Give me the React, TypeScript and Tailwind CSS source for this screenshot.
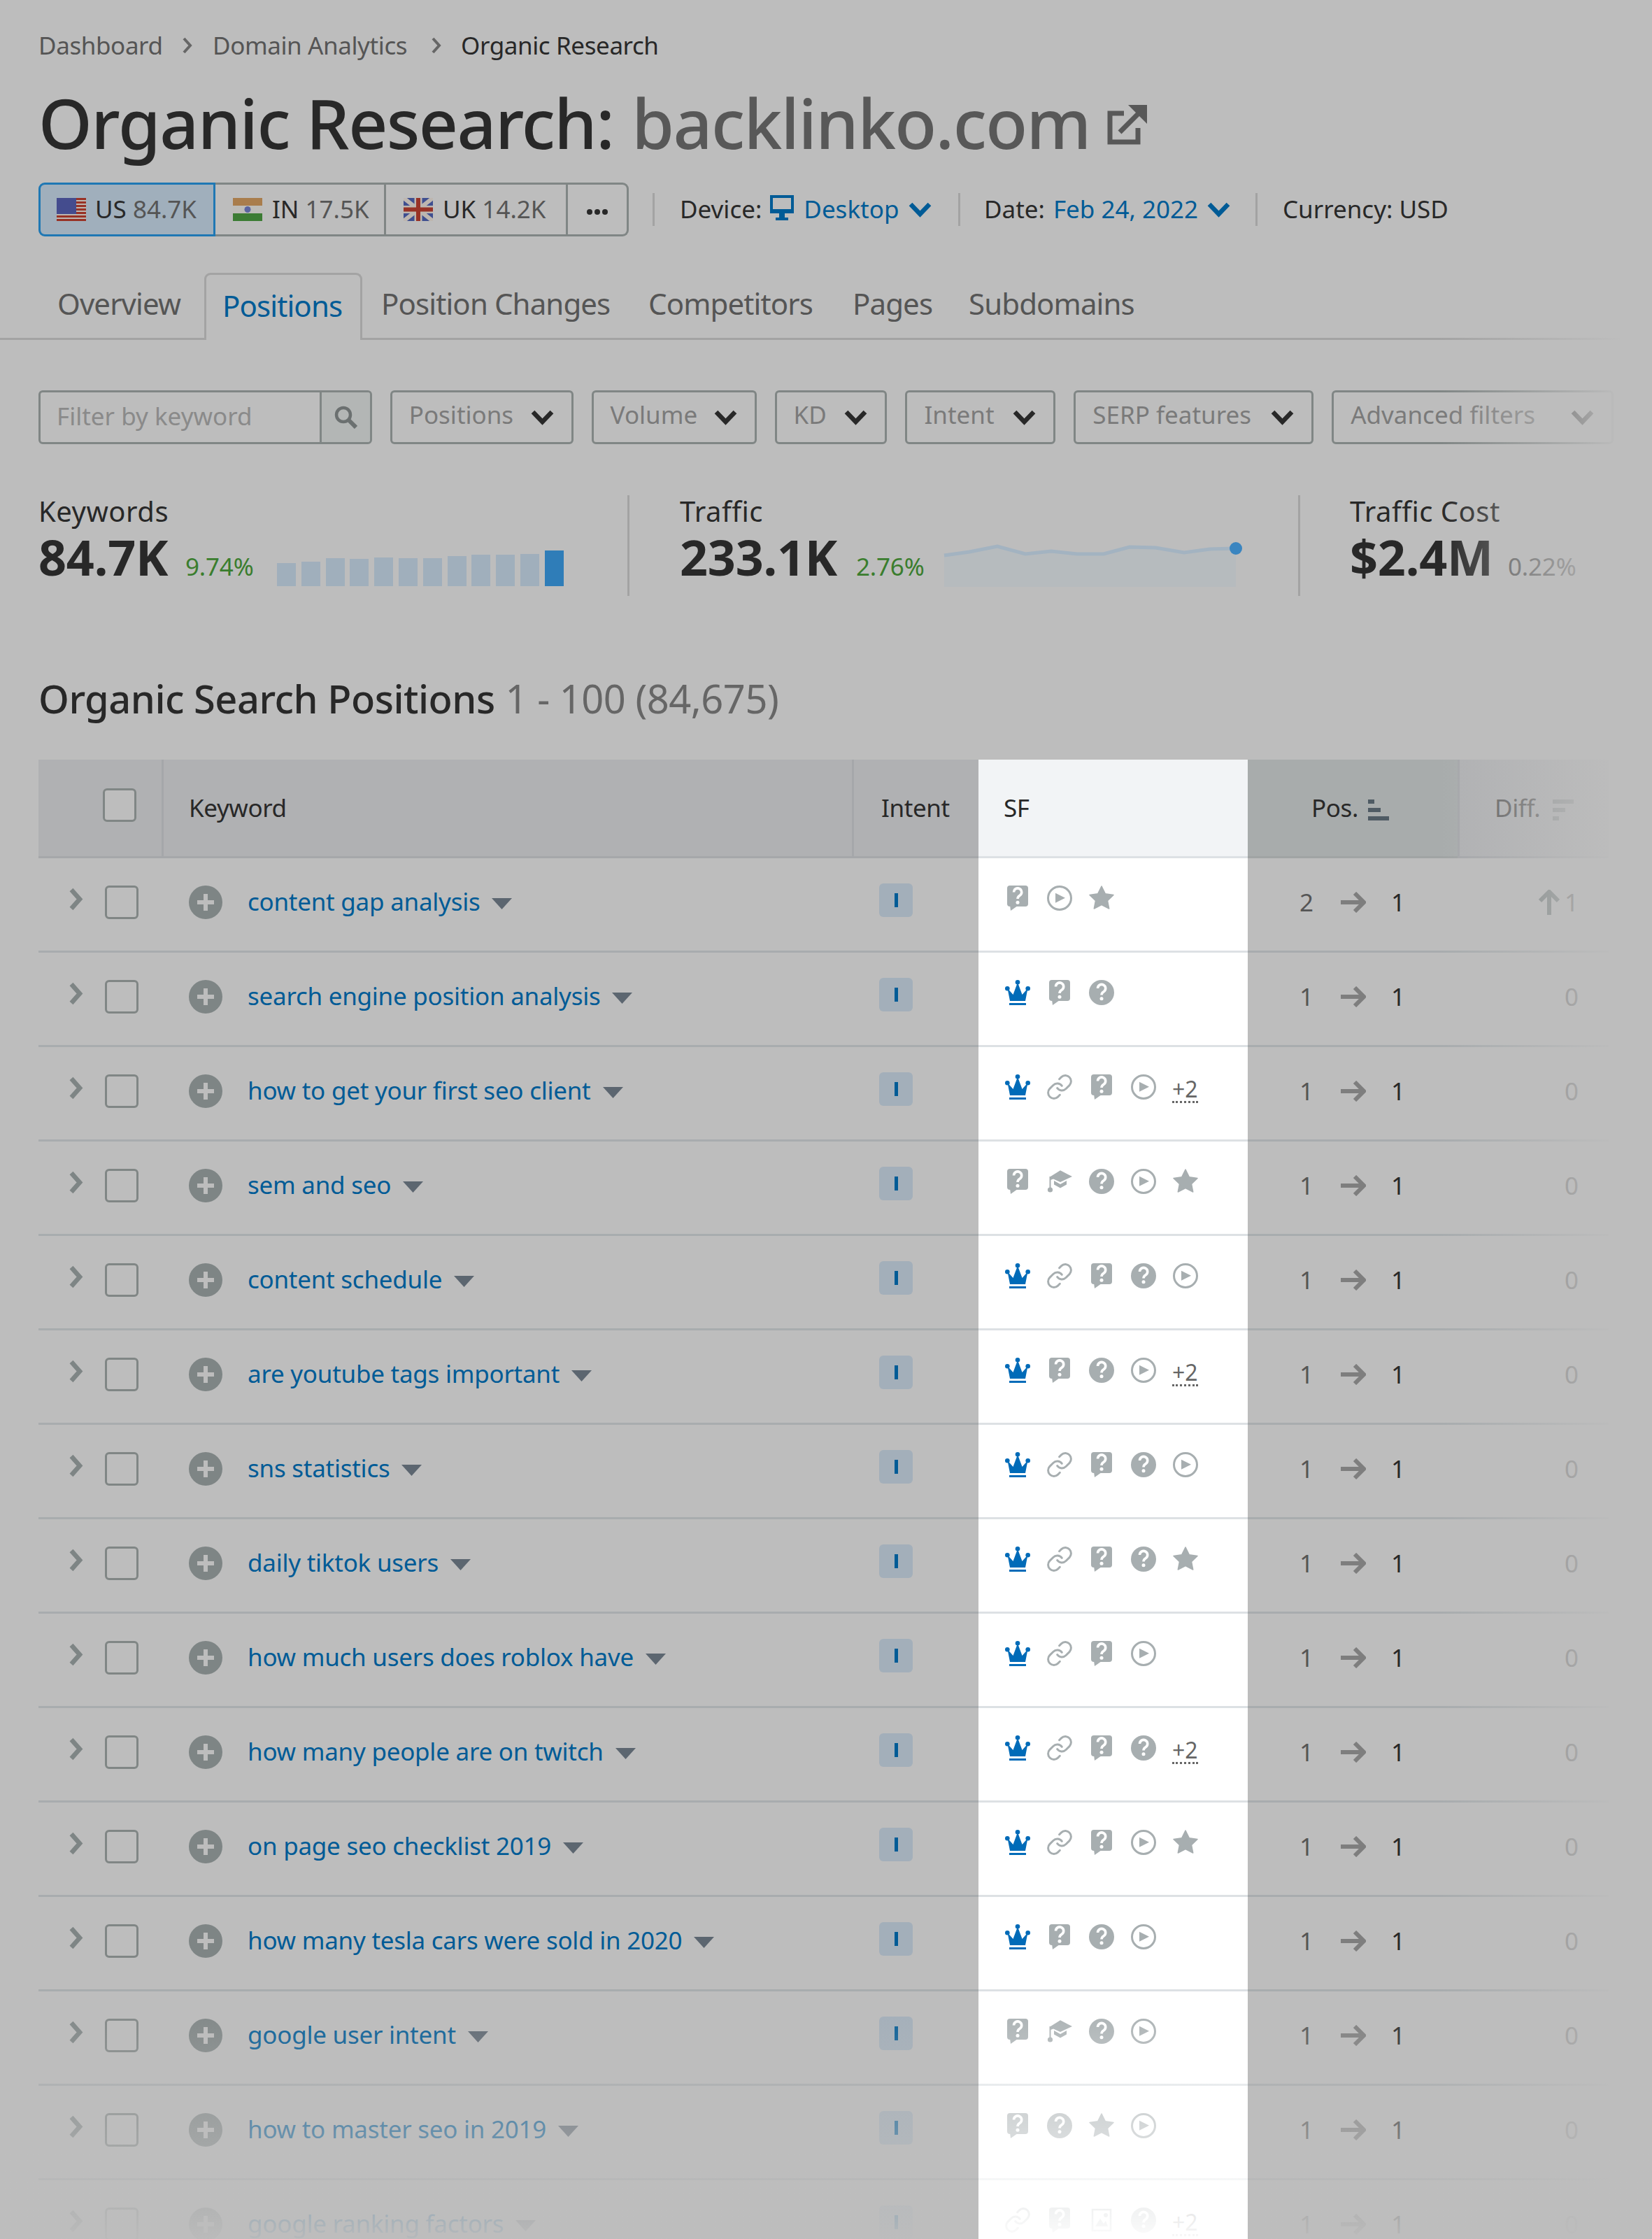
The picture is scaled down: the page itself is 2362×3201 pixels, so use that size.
import React from "react";

type Feature = "crown" | "link" | "bubble" | "help" | "play" | "star" | "cap" | "image" | "more";

type Row = { keyword: string; features: Feature[]; from: string; diff?: string };

const rows: Row[] = [
  { keyword: "content gap analysis", features: ["bubble", "play", "star"], from: "2", diff: "1" },
  { keyword: "search engine position analysis", features: ["crown", "bubble", "help"], from: "1" },
  { keyword: "how to get your first seo client", features: ["crown", "link", "bubble", "play", "more"], from: "1" },
  { keyword: "sem and seo", features: ["bubble", "cap", "help", "play", "star"], from: "1" },
  { keyword: "content schedule", features: ["crown", "link", "bubble", "help", "play"], from: "1" },
  { keyword: "are youtube tags important", features: ["crown", "bubble", "help", "play", "more"], from: "1" },
  { keyword: "sns statistics", features: ["crown", "link", "bubble", "help", "play"], from: "1" },
  { keyword: "daily tiktok users", features: ["crown", "link", "bubble", "help", "star"], from: "1" },
  { keyword: "how much users does roblox have", features: ["crown", "link", "bubble", "play"], from: "1" },
  { keyword: "how many people are on twitch", features: ["crown", "link", "bubble", "help", "more"], from: "1" },
  { keyword: "on page seo checklist 2019", features: ["crown", "link", "bubble", "play", "star"], from: "1" },
  { keyword: "how many tesla cars were sold in 2020", features: ["crown", "bubble", "help", "play"], from: "1" },
  { keyword: "google user intent", features: ["bubble", "cap", "help", "play"], from: "1" },
  { keyword: "how to master seo in 2019", features: ["bubble", "help", "star", "play"], from: "1" },
  { keyword: "google ranking factors", features: ["link", "bubble", "image", "help", "more"], from: "1" },
];

const barHeights = [33, 35, 40, 39, 41, 40, 40, 43, 45, 45, 46, 51];
const linePoints = "0,23 36,18 76,10 116,21 153,17 190,21 228,21 265,11 302,12 343,19 380,14 417,13";

function Chevron({ color = "#282828" }: { color?: string }) {
  return (
    <svg width="33" height="22" viewBox="0 0 33 22" className="shrink-0">
      <polyline points="3,3 16.5,17 30,3" fill="none" stroke={color} strokeWidth="6.5" />
    </svg>
  );
}

function QuestionMark({ dy = 0 }: { dy?: number }) {
  return (
    <g transform={`translate(0 ${dy})`}>
      <path d="M12.5 9.5a5.6 5.6 0 1 1 8.6 4.7c-2 1.3-3.1 2.2-3.1 4.8" fill="none" stroke="#fff" strokeWidth="3.6" />
      <circle cx="18" cy="24.3" r="2.5" fill="#fff" />
    </g>
  );
}

function FeatureIcon({ type }: { type: Feature }) {
  const gray = "#a7aeb0";
  return (
    <svg width="36" height="36" viewBox="0 0 36 36" fill={gray}>
      {type === "crown" && (
        <g fill="#006bb8">
          <circle cx="18" cy="3.3" r="3.3" />
          <circle cx="3.3" cy="12.3" r="3.3" />
          <circle cx="32.7" cy="12.3" r="3.3" />
          <polygon points="3.5,12 11.5,21 18,3.5 24.5,21 32.5,12 29,30 7,30" />
          <rect x="6" y="33" width="24" height="3" />
        </g>
      )}
      {type === "bubble" && (
        <>
          <rect x="3" y="0" width="30" height="30" rx="4" />
          <polygon points="7,28 8,36 18,29" />
          <QuestionMark />
        </>
      )}
      {type === "help" && (
        <>
          <circle cx="18" cy="18" r="18" />
          <QuestionMark dy={2.5} />
        </>
      )}
      {type === "play" && (
        <>
          <circle cx="18" cy="18" r="16.5" fill="none" stroke={gray} strokeWidth="3" />
          <polygon points="12,10.7 12,24.7 26,17.7" />
        </>
      )}
      {type === "star" && (
        <polygon
          points="18,1 23.2,11.7 35,13.4 26.5,21.6 28.7,33 18,27.5 7.3,33 9.5,21.6 1,13.4 12.8,11.7"
          stroke={gray}
          strokeWidth="1.5"
          strokeLinejoin="round"
        />
      )}
      {type === "link" && (
        <g fill="none" stroke={gray} strokeWidth="1.8" strokeLinecap="round" transform="translate(-1.8 -1.8) scale(1.65)">
          <path d="M10 13a5 5 0 0 0 7.54.54l3-3a5 5 0 0 0-7.07-7.07l-1.72 1.71" />
          <path d="M14 11a5 5 0 0 0-7.54-.54l-3 3a5 5 0 0 0 7.07 7.07l1.71-1.71" />
        </g>
      )}
      {type === "cap" && (
        <>
          <polygon points="19,2.3 36,11 19,19 9,14.5 5,16 5,11" />
          <polygon points="10,17 19,22 28,17 28,22.5 19,27.5 10,22.5" />
          <rect x="3.5" y="11" width="2" height="16" />
          <circle cx="4.5" cy="30" r="3.6" />
        </>
      )}
      {type === "image" && (
        <>
          <rect x="5" y="3" width="26" height="30" fill="none" stroke={gray} strokeWidth="2.5" />
          <polygon points="9,27 16,16 21,23 24,19 27,27" />
          <circle cx="24" cy="11" r="3" />
        </>
      )}
    </svg>
  );
}

function SortIcon({ reversed, color }: { reversed?: boolean; color: string }) {
  const widths = reversed ? [30, 18, 9] : [9, 18, 30];
  return (
    <svg width="30" height="30" viewBox="0 0 30 30">
      {widths.map((w, i) => (
        <rect key={i} x="0" y={i * 12} width={w} height="6" fill={color} />
      ))}
    </svg>
  );
}

function CheckBox() {
  return <div className="h-[48px] w-[48px] rounded-[6px] border-[3px] border-[#808685]" />;
}

function Flag({ code }: { code: "us" | "in" | "uk" }) {
  return (
    <svg width="42" height="33" viewBox="0 0 42 33" className="shrink-0">
      {code === "us" && (
        <>
          <rect width="42" height="33" fill="#bdb6b0" />
          {[0, 5, 10, 15, 20, 25, 30].map((y) => (
            <rect key={y} y={y} width="42" height="3" fill="#983226" />
          ))}
          <rect width="28" height="23" fill="#444c8e" />
        </>
      )}
      {code === "in" && (
        <>
          <rect width="42" height="11" fill="#a97d4c" />
          <rect y="11" width="42" height="11" fill="#bdbcb8" />
          <rect y="22" width="42" height="11" fill="#3c7c34" />
          <circle cx="21" cy="16.5" r="4.5" fill="#5a64a0" />
        </>
      )}
      {code === "uk" && (
        <>
          <rect width="42" height="33" fill="#3f4f90" />
          <path d="M0 0L42 33M42 0L0 33" stroke="#bdb6b0" strokeWidth="6" />
          <path d="M21 0V33M0 16.5H42" stroke="#bdb6b0" strokeWidth="11" />
          <path d="M21 0V33M0 16.5H42" stroke="#983226" strokeWidth="6" />
        </>
      )}
    </svg>
  );
}

function FilterButton({ label, width }: { label: string; width: string }) {
  return (
    <div className={`flex h-[77px] items-center justify-between rounded-[6px] border-[3px] border-[#808685] pl-[24px] pr-[25px] ${width}`}>
      <span className="-mt-[6px] text-[#7a7a7a]">{label}</span>
      <Chevron />
    </div>
  );
}

function TableRow({ row }: { row: Row }) {
  return (
    <div className="grid h-[135px] grid-cols-[176px_987px_181px_385px_300px_216px] text-[35px]">
      <div className="flex items-center justify-between border-b-[3px] border-[#a8acae] pb-[6px] pl-[44px] pr-[33px]">
        <svg width="21" height="33" viewBox="0 0 21 33" className="-mt-[10px]">
          <polyline points="3,3 15,16.5 3,30" fill="none" stroke="#7e8585" strokeWidth="6.5" />
        </svg>
        <CheckBox />
      </div>
      <div className="flex items-center border-b-[3px] border-[#a8acae] pb-[6px] pl-[39px]">
        <div className="relative h-[48px] w-[48px] rounded-full bg-[#7e8585]">
          <div className="absolute left-[12px] top-[21px] h-[6px] w-[24px] bg-[#bdbdbd]" />
          <div className="absolute left-[21px] top-[12px] h-[24px] w-[6px] bg-[#bdbdbd]" />
        </div>
        <span className="-mt-[2px] ml-[36px] tracking-[-0.25px] text-[#005b96]">{row.keyword}</span>
        <svg width="29" height="16" viewBox="0 0 29 16" className="ml-[17px] mt-[4px]">
          <polygon points="0,0 29,0 14.5,16" fill="#5c6670" />
        </svg>
      </div>
      <div className="flex items-center border-b-[3px] border-[#a8acae] pb-[6px] pl-[39px]">
        <div className="-mt-[6px] flex h-[48px] w-[48px] items-center justify-center rounded-[6px] bg-[#a3afba]">
          <div className="h-[20px] w-[5px] bg-[#005b96]" />
        </div>
      </div>
      <div className="flex items-start gap-[24px] border-b-[3px] border-[#dde1e4] bg-white pl-[38px] pt-[39px]">
        {row.features.map((type, i) =>
          type === "more" ? (
            <span key={i} className="-ml-[1px] mt-[4px] border-b-[3px] border-dotted border-[#666] text-[32px] leading-[34px] text-[#666]">
              +2
            </span>
          ) : (
            <FeatureIcon key={i} type={type} />
          )
        )}
      </div>
      <div className="flex items-center border-b-[3px] border-[#a8acae] pb-[6px] pl-[74px]">
        <span className="w-[59px] text-[#555]">{row.from}</span>
        <svg width="36" height="30" viewBox="0 0 36 30">
          <path d="M0 15H32M20 2L33 15L20 28" fill="none" stroke="#7e7e7e" strokeWidth="6" />
        </svg>
        <span className="ml-[36px] text-[#282828]">1</span>
      </div>
      <div className="flex items-center justify-end border-b-[3px] border-[#a8acae] pb-[6px] pr-[43px]">
        {row.diff && (
          <svg width="30" height="36" viewBox="0 0 30 36" className="mr-[7px]">
            <path d="M15 36V3M2 16L15 3L28 16" fill="none" stroke="#6f7877" strokeWidth="6" />
          </svg>
        )}
        <span className="text-[#666]">{row.diff ?? "0"}</span>
      </div>
    </div>
  );
}

export default function App() {
  return (
    <div className="relative h-[3201px] w-[2362px] overflow-hidden bg-[#bdbdbd] font-['Noto_Sans',sans-serif] text-[35px] text-[#282828]">
      <div className="px-[55px]">
        <nav className="mt-[43px] flex h-[44px] items-center text-[35px] tracking-[-0.4px]">
          <span className="w-[205px] text-[#555]">Dashboard</span>
          <svg width="16" height="24" viewBox="0 0 16 24">
            <polyline points="3,2 12,12 3,22" fill="none" stroke="#666" strokeWidth="4" />
          </svg>
          <span className="ml-[28px] w-[312px] text-[#555]">Domain Analytics</span>
          <svg width="16" height="24" viewBox="0 0 16 24">
            <polyline points="3,2 12,12 3,22" fill="none" stroke="#666" strokeWidth="4" />
          </svg>
          <span className="ml-[27px]">Organic Research</span>
        </nav>

        <h1 className="mt-[30px] flex h-[116px] items-center text-[98px] font-medium tracking-[-1.6px]">
          Organic Research:
          <span className="ml-[26px] text-[#585858]">backlinko.com</span>
          <svg width="57" height="57" viewBox="0 0 57 57" className="ml-[24px] mt-[6px]">
            <path d="M24 12H4V53H44V33" fill="none" stroke="#585858" strokeWidth="7" />
            <path d="M18 39L46 11" stroke="#585858" strokeWidth="7" />
            <polygon points="30,0 57,0 57,27" fill="#585858" />
          </svg>
        </h1>

        <div className="mt-[28px] flex h-[77px] items-center">
          <div className="flex h-full w-[253px] items-center gap-[13px] rounded-l-[9px] border-[3px] border-[#1f78b4] bg-[#a0afbc] pl-[23px]">
            <Flag code="us" />
            <span>
              US <span className="text-[#555]">84.7K</span>
            </span>
          </div>
          <div className="flex h-full w-[244px] items-center gap-[14px] border-y-[3px] border-r-[3px] border-[#808685] pl-[25px]">
            <Flag code="in" />
            <span>
              IN <span className="text-[#555]">17.5K</span>
            </span>
          </div>
          <div className="flex h-full w-[260px] items-center gap-[14px] border-y-[3px] border-r-[3px] border-[#808685] pl-[25px]">
            <Flag code="uk" />
            <span>
              UK <span className="text-[#555]">14.2K</span>
            </span>
          </div>
          <div className="flex h-full w-[87px] items-center justify-center gap-[3px] rounded-r-[9px] border-y-[3px] border-r-[3px] border-[#808685] pt-[6px]">
            <div className="h-[8px] w-[8px] rounded-full bg-[#282828]" />
            <div className="h-[8px] w-[8px] rounded-full bg-[#282828]" />
            <div className="h-[8px] w-[8px] rounded-full bg-[#282828]" />
          </div>

          <div className="ml-[34px] h-[47px] w-[3px] bg-[#a3a3a3]" />
          <div className="ml-[36px] flex w-[398px] items-center">
            <span>Device:</span>
            <svg width="34" height="36" viewBox="0 0 34 36" className="ml-[12px] -mt-[6px]">
              <rect x="2" y="2" width="30" height="22" fill="none" stroke="#005b96" strokeWidth="4" />
              <rect x="0" y="20" width="34" height="6" fill="#005b96" />
              <rect x="13" y="26" width="8" height="6" fill="#005b96" />
              <rect x="8" y="32" width="18" height="4" fill="#005b96" />
            </svg>
            <span className="ml-[14px] text-[#005b96]">Desktop</span>
            <span className="ml-[14px]">
              <Chevron color="#005b96" />
            </span>
          </div>
          <div className="h-[47px] w-[3px] bg-[#a3a3a3]" />
          <div className="ml-[34px] flex w-[388px] items-center">
            <span>Date:</span>
            <span className="ml-[12px] text-[#005b96]">Feb 24, 2022</span>
            <span className="ml-[13px]">
              <Chevron color="#005b96" />
            </span>
          </div>
          <div className="h-[47px] w-[3px] bg-[#a3a3a3]" />
          <span className="ml-[36px]">Currency: USD</span>
        </div>
      </div>

      <div className="mt-[52px] flex h-[96px] items-end border-b-[3px] border-[#a3a3a3] pl-[55px] text-[42px] tracking-[-0.9px] text-[#555]">
        <span className="flex h-[96px] w-[237px] items-center pb-[4px] pl-[27px]">Overview</span>
        <span className="-mb-[3px] flex h-[96px] w-[226px] items-center rounded-t-[9px] border-x-[3px] border-t-[3px] border-[#a3a3a3] bg-[#bdbdbd] pb-[7px] pl-[23px] text-[#005b96]">
          Positions
        </span>
        <span className="flex h-[96px] w-[382px] items-center pb-[4px] pl-[27px]">Position Changes</span>
        <span className="flex h-[96px] w-[292px] items-center pb-[4px] pl-[27px]">Competitors</span>
        <span className="flex h-[96px] w-[166px] items-center pb-[4px] pl-[27px]">Pages</span>
        <span className="flex h-[96px] items-center pb-[4px] pl-[27px]">Subdomains</span>
      </div>

      <div className="mt-[72px] flex gap-[26px] px-[55px]">
        <div className="flex h-[77px] w-[477px] rounded-[6px] border-[3px] border-[#808685]">
          <span className="flex flex-1 items-center pb-[2px] pl-[23px] text-[#8a8a8a]">Filter by keyword</span>
          <div className="flex w-[72px] items-center justify-center rounded-r-[4px] border-l-[3px] border-[#808685] bg-[#b3b6b5]">
            <svg width="33" height="33" viewBox="0 0 33 33">
              <circle cx="13" cy="13" r="10" fill="none" stroke="#6b7070" strokeWidth="4.5" />
              <path d="M20 20L31 31" stroke="#6b7070" strokeWidth="6" />
            </svg>
          </div>
        </div>
        <FilterButton label="Positions" width="w-[262px]" />
        <FilterButton label="Volume" width="w-[236px]" />
        <FilterButton label="KD" width="w-[161px]" />
        <FilterButton label="Intent" width="w-[215px]" />
        <FilterButton label="SERP features" width="w-[343px]" />
        <FilterButton label="Advanced filters" width="w-[403px]" />
      </div>

      <div className="mt-[73px] flex h-[144px] pl-[55px]">
        <div className="w-[845px] border-r-[3px] border-[#a3a3a3]">
          <div className="text-[40px] leading-[46px] tracking-[0.5px]">Keywords</div>
          <div className="mt-[2px] flex h-[80px] items-end">
            <span className="w-[210px] text-[70px] font-bold leading-[80px] tracking-[-0.2px]">84.7K</span>
            <span className="mb-[4px] w-[131px] text-[35px] leading-[44px] tracking-[-0.2px] text-[#3a7d2e]">9.74%</span>
            <div className="mb-[-2px] flex items-end gap-[7.8px]">
              {barHeights.map((h, i) => (
                <div
                  key={i}
                  className={`w-[27px] ${i === barHeights.length - 1 ? "bg-[#2f7db8]" : "bg-[#a0afbc]"}`}
                  style={{ height: h }}
                />
              ))}
            </div>
          </div>
        </div>
        <div className="w-[959px] border-r-[3px] border-[#a3a3a3] pl-[72px]">
          <div className="text-[40px] leading-[46px] tracking-[0.5px]">Traffic</div>
          <div className="mt-[2px] flex h-[80px] items-end">
            <span className="w-[252px] text-[70px] font-bold leading-[80px] tracking-[-0.2px]">233.1K</span>
            <span className="mb-[4px] w-[126px] text-[35px] leading-[44px] tracking-[-0.2px] text-[#3a7d2e]">2.76%</span>
            <svg width="426" height="68" viewBox="0 0 426 68" className="mb-[-3px] overflow-visible">
              <polygon points={`${linePoints} 417,68 0,68`} fill="#b6bbbe" />
              <polyline points={linePoints} fill="none" stroke="#a3b3c1" strokeWidth="5" />
              <circle cx="417" cy="13" r="9" fill="#3a85c0" />
            </svg>
          </div>
        </div>
        <div className="pl-[71px]">
          <div className="text-[40px] leading-[46px] tracking-[0.5px]">Traffic Cost</div>
          <div className="mt-[2px] flex h-[80px] items-end">
            <span className="w-[226px] text-[70px] font-bold leading-[80px] tracking-[-0.2px]">$2.4M</span>
            <span className="mb-[4px] text-[35px] leading-[44px] tracking-[-0.2px] text-[#555]">0.22%</span>
          </div>
        </div>
      </div>

      <div className="mt-[104px] flex h-[70px] items-baseline px-[55px] text-[56px] font-medium tracking-[-0.5px]">
        Organic Search Positions
        <span className="ml-[15px] font-normal tracking-[-0.5px] text-[#666]">1 - 100 (84,675)</span>
      </div>

      <div className="ml-[55px] mt-[60px]">
        <div className="grid h-[141px] grid-cols-[176px_987px_181px_385px_300px_216px] text-[35px] tracking-[-0.4px]">
          <div className="flex items-center justify-end border-b-[3px] border-[#a5a7aa] bg-[#b0b1b3] pb-[8px] pr-[36px]">
            <div className="rounded-[6px] bg-[#bdbdbd]">
              <CheckBox />
            </div>
          </div>
          <div className="flex items-center border-b-[3px] border-l-[3px] border-[#a5a7aa] bg-[#b0b1b3] pl-[36px]">Keyword</div>
          <div className="flex items-center border-b-[3px] border-l-[3px] border-[#a5a7aa] bg-[#b0b1b3] pl-[39px]">Intent</div>
          <div className="flex items-center border-b-[3px] border-[#dde1e4] bg-[#f2f4f6] pl-[36px]">SF</div>
          <div className="flex items-center border-b-[3px] border-[#a0a4a4] bg-[#a8acac] pl-[91px]">
            Pos.
            <span className="ml-[14px] mt-[6px]">
              <SortIcon color="#4f5b64" />
            </span>
          </div>
          <div className="flex items-center border-b-[3px] border-l-[3px] border-[#a5a7aa] bg-[#b0b1b3] pl-[50px] text-[#555]">
            Diff.
            <span className="ml-[18px] mt-[6px]">
              <SortIcon reversed color="#8a8f90" />
            </span>
          </div>
        </div>
        {rows.map((row) => (
          <TableRow key={row.keyword} row={row} />
        ))}
      </div>

      {/* fade-outs on the right and bottom edges */}
      <div className="pointer-events-none absolute inset-y-0 right-0 w-[302px] bg-[linear-gradient(to_right,rgba(189,189,189,0)_0,#bdbdbd_260px)]" />
      <div className="pointer-events-none absolute inset-x-0 bottom-0 flex h-[351px]">
        <div className="w-[1399px] bg-gradient-to-b from-[#bdbdbd00] to-[#bdbdbdf5]" />
        <div className="w-[385px] bg-gradient-to-b from-[#ffffff00] to-[#fffffff5]" />
        <div className="flex-1 bg-gradient-to-b from-[#bdbdbd00] to-[#bdbdbdf5]" />
      </div>
    </div>
  );
}
